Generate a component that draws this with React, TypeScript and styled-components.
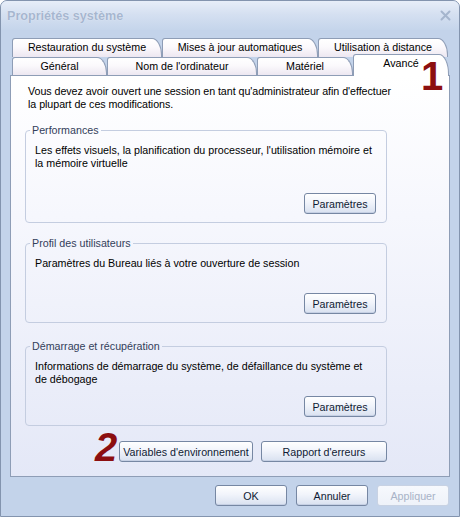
import React from "react";
import styled, { createGlobalStyle } from "styled-components";

const GlobalStyle = createGlobalStyle`
  html, body { margin: 0; padding: 0; background: #ffffff; }
  body {
    width: 460px; height: 517px; overflow: hidden;
    font-family: "Liberation Sans", Arial, sans-serif;
    font-size: 10.7px; color: #000;
  }
  * { box-sizing: border-box; }
`;

const Window = styled.div`
  position: relative;
  width: 460px;
  height: 517px;
  display: flex;
  flex-direction: column;
  background: #c3d3ea;
  border: 1px solid #8394ae;
  border-radius: 7px 7px 0 0;
  overflow: hidden;
`;

const TitleBar = styled.div`
  flex: none;
  height: 29px;
  display: flex;
  align-items: center;
  justify-content: space-between;
  padding: 0 8px 0 6px;
  background: linear-gradient(#e7eef8, #d5e0f1 45%, #c5d5eb);
`;

const Title = styled.div`
  font-family: "Liberation Sans", Arial, sans-serif;
  font-weight: bold;
  font-size: 12.6px;
  color: #a6b6cf;
  text-shadow: 0 0 1px #f2f6fb;
`;

const CloseIcon = () => (
  <svg width="11" height="11" viewBox="0 0 11 11">
    <path d="M1.5 1.5 L9.5 9.5 M9.5 1.5 L1.5 9.5" stroke="#a5b5cd" strokeWidth="2" strokeLinecap="round" />
  </svg>
);

const Body = styled.div`
  flex: 1;
  display: flex;
  flex-direction: column;
  padding: 8px 9px 0 9px;
`;

const TabStrip = styled.div`
  display: flex;
  flex-direction: column;
  padding-left: 2px;
`;

const TabRow = styled.div<{ $h: number }>`
  display: flex;
  align-items: flex-end;
  height: ${(p) => p.$h}px;
`;

const Tab = styled.div<{ $w: number; $h: number; $active?: boolean }>`
  position: relative;
  flex: none;
  width: ${(p) => p.$w}px;
  height: ${(p) => p.$h}px;
  margin-bottom: ${(p) => (p.$active ? -1 : 0)}px;
  z-index: ${(p) => (p.$active ? 2 : 1)};
  border: 1px solid #8e9db6;
  border-bottom: none;
  border-radius: 3px 10px 0 0 / 3px ${(p) => p.$h - 2}px 0 0;
  background: ${(p) =>
    p.$active
      ? "#ffffff"
      : "linear-gradient(#ffffff, #fbf9fc 45%, #ede7f1)"};
  text-align: center;
  line-height: 17px;
  white-space: nowrap;
  color: #000;
`;

const Panel = styled.div`
  position: relative;
  z-index: 1;
  height: 402px;
  display: flex;
  flex-direction: column;
  padding: 9px 62px 0 14px;
  border: 1px solid #8e9db6;
  background: linear-gradient(#ffffff, #f6f7fd 35%, #e4e8f7);
`;

const Intro = styled.p`
  margin: 0 -50px 13px 0;
  padding-left: 3px;
  line-height: 13px;
  white-space: nowrap;
  letter-spacing: -0.05px;
`;

const Group = styled.fieldset<{ $mt: number }>`
  margin: ${(p) => p.$mt}px 0 0 0;
  padding: 0;
  border: 1px solid #c4cde0;
  border-radius: 4px;
  min-width: 0;
`;

const Legend = styled.legend`
  margin-left: 4px;
  padding: 0 2px;
  line-height: 13px;
  color: #33405a;
`;

const GroupBody = styled.div<{ $h: number }>`
  height: ${(p) => p.$h}px;
  display: flex;
  flex-direction: column;
  justify-content: space-between;
  padding: 7px 10px 8px 9px;
`;

const Desc = styled.p`
  margin: 0;
  line-height: 13px;
`;

const ButtonRow = styled.div`
  display: flex;
  justify-content: flex-end;
`;

const Button = styled.button<{ $w: number; $disabled?: boolean }>`
  width: ${(p) => p.$w}px;
  height: 21px;
  padding: 0;
  font-family: "Liberation Sans", Arial, sans-serif;
  font-size: 10.7px;
  color: ${(p) => (p.$disabled ? "#a8b3c7" : "#0f1a33")};
  border: 1px solid ${(p) => (p.$disabled ? "#c8d2e3" : "#7687a3")};
  border-radius: 3px;
  background: ${(p) =>
    p.$disabled
      ? "linear-gradient(#f7f9fd, #eef2f9)"
      : "linear-gradient(#ffffff, #f1f4fb 45%, #d9e1f0)"};
  box-shadow: ${(p) => (p.$disabled ? "none" : "inset 0 -1px 0 #c6d0e4")};
`;

const ActionRow = styled.div`
  display: flex;
  justify-content: flex-end;
  gap: 8px;
  margin-top: 15px;
`;

const Footer = styled.div`
  display: flex;
  justify-content: flex-end;
  gap: 9px;
  padding: 8px 1px 0 0;
`;

const Mark = styled.span<{ $x: number; $y: number; $italic?: boolean }>`
  position: absolute;
  left: ${(p) => p.$x}px;
  top: ${(p) => p.$y}px;
  z-index: 5;
  font-family: "Liberation Sans", Arial, sans-serif;
  font-weight: bold;
  font-style: ${(p) => (p.$italic ? "italic" : "normal")};
  font-size: 40px;
  line-height: 40px;
  color: #8c0f10;
`;

const groups = [
  {
    title: "Performances",
    text: "Les effets visuels, la planification du processeur, l'utilisation mémoire et la mémoire virtuelle",
    mt: 0,
    h: 85,
  },
  {
    title: "Profil des utilisateurs",
    text: "Paramètres du Bureau liés à votre ouverture de session",
    mt: 14,
    h: 72,
  },
  {
    title: "Démarrage et récupération",
    text: "Informations de démarrage du système, de défaillance du système et de débogage",
    mt: 17,
    h: 72,
  },
];

export default function App() {
  return (
    <>
      <GlobalStyle />
      <Window>
        <TitleBar>
          <Title>Propriétés système</Title>
          <CloseIcon />
        </TitleBar>
        <Body>
          <TabStrip>
            <TabRow $h={19}>
              <Tab $w={150} $h={19}>Restauration du système</Tab>
              <Tab $w={156} $h={19}>Mises à jour automatiques</Tab>
              <Tab $w={130} $h={19}>Utilisation à distance</Tab>
            </TabRow>
            <TabRow $h={18}>
              <Tab $w={95} $h={18}>Général</Tab>
              <Tab $w={150} $h={18}>Nom de l'ordinateur</Tab>
              <Tab $w={96} $h={18}>Matériel</Tab>
              <Tab $w={96} $h={22} $active>Avancé</Tab>
            </TabRow>
          </TabStrip>
          <Panel>
            <Intro>
              Vous devez avoir ouvert une session en tant qu'administrateur afin d'effectuer
              <br />
              la plupart de ces modifications.
            </Intro>
            {groups.map((g) => (
              <Group key={g.title} $mt={g.mt}>
                <Legend>{g.title}</Legend>
                <GroupBody $h={g.h}>
                  <Desc>{g.text}</Desc>
                  <ButtonRow>
                    <Button $w={72}>Paramètres</Button>
                  </ButtonRow>
                </GroupBody>
              </Group>
            ))}
            <ActionRow>
              <Button $w={134}>Variables d'environnement</Button>
              <Button $w={126}>Rapport d'erreurs</Button>
            </ActionRow>
          </Panel>
          <Footer>
            <Button $w={72}>OK</Button>
            <Button $w={72}>Annuler</Button>
            <Button $w={72} $disabled>Appliquer</Button>
          </Footer>
        </Body>
        <Mark $x={420} $y={55}>1</Mark>
        <Mark $x={94} $y={426} $italic>2</Mark>
      </Window>
    </>
  );
}
